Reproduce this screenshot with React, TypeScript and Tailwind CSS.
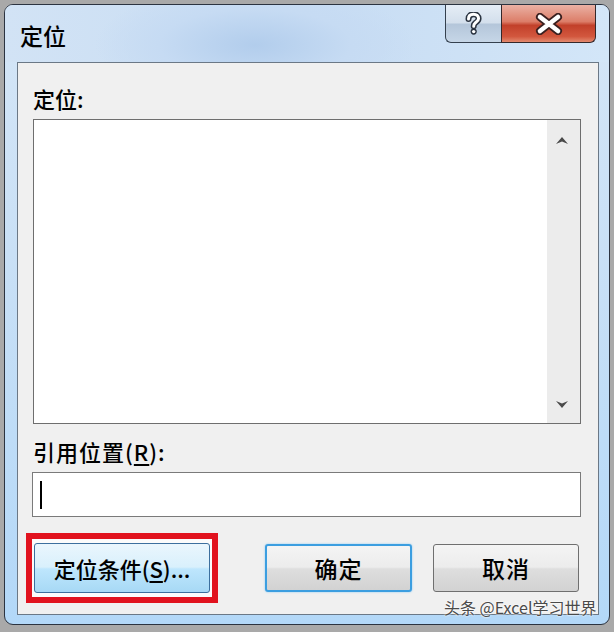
import React from "react";

const font = "font-['Noto_Sans_CJK_SC','Noto_Sans',sans-serif]";

function HelpGlyph() {
  const d = "M3.5 7 C3.5 3.4 6 2.2 8.5 2.2 C11.6 2.2 13.6 4 13.6 6.6 C13.6 9 11.6 10 10.2 11 C9.1 11.8 8.7 12.5 8.7 14.2";
  return (
    <svg width="17" height="24" viewBox="0 0 17 24">
      <path d={d} fill="none" stroke="#2a3340" strokeWidth="6" strokeLinecap="round" />
      <path d={d} fill="none" stroke="#ffffff" strokeWidth="3" strokeLinecap="round" />
      <circle cx="8.7" cy="19.6" r="3.1" fill="#2a3340" />
      <circle cx="8.7" cy="19.6" r="1.7" fill="#ffffff" />
    </svg>
  );
}

function CloseGlyph() {
  return (
    <svg width="30" height="22" viewBox="0 0 30 22">
      <path d="M6 4 L24 18 M24 4 L6 18" stroke="#3a2020" strokeWidth="8" strokeLinecap="round" />
      <path d="M6 4 L24 18 M24 4 L6 18" stroke="#ffffff" strokeWidth="4.6" strokeLinecap="round" />
    </svg>
  );
}

function ScrollArrow({ down }: { down?: boolean }) {
  return (
    <svg width="12" height="7" viewBox="0 0 12 7" className={down ? "rotate-180" : ""}>
      <path d="M0 7 L6 0 L12 7 L6 4.5 Z" fill="#4a4a4a" />
    </svg>
  );
}

export default function App() {
  return (
    <div className={`relative w-[614px] h-[632px] bg-[#a9a9a9] pt-[4px] pl-[4px] pr-[4px] pb-[7px] ${font}`}>
      <div className="flex flex-col h-full rounded-[9px] border border-[#2b3340] bg-[linear-gradient(180deg,#d5e6f7_0%,#c9e0f6_40%,#b3d8f8_100%)] overflow-hidden">
        {/* title bar */}
        <div className="relative h-[57px] shrink-0 bg-[radial-gradient(ellipse_160px_60px_at_250px_40px,#b2cdec_0%,#c6dbf3_60%,transparent_100%),linear-gradient(90deg,#d2e3f5_0%,#c7dcf3_50%,#d3e6f8_100%)]">
          <div className="absolute left-[15px] top-[15px] text-[23px] leading-[30px] font-medium text-black">定位</div>
          <div className="absolute right-[13px] top-0 flex h-[38px]">
            <div className="w-[56px] flex items-center justify-center rounded-bl-[6px] border border-t-0 border-r-0 border-[#34404e] bg-[linear-gradient(180deg,#e5edf6_0%,#d3dfec_48%,#b4c6da_52%,#c6d6e7_100%)]">
              <HelpGlyph />
            </div>
            <div className="w-[95px] flex items-center justify-center rounded-br-[6px] border border-t-0 border-[#34282a] bg-[linear-gradient(180deg,#eab1a4_0%,#dc7d68_45%,#c2402a_55%,#d2573e_85%,#e38a6f_100%)]">
              <CloseGlyph />
            </div>
          </div>
        </div>

        {/* dialog body */}
        <div className="flex-1 ml-[12px] mr-[10px] mb-[9px] border border-[#6b7886] bg-[#f0f0f0] flex flex-col pl-[15px] pr-[17px] pt-[20px] font-medium">
          <div className="text-[22px] leading-[30px] text-black">定位:</div>
          <div className="mt-[6px] h-[305px] border border-[#6e6e6e] bg-white flex justify-end">
            <div className="w-[33px] bg-[#ececec] flex flex-col items-center justify-between pt-[17px] pb-[15px] pr-[3px]">
              <ScrollArrow />
              <ScrollArrow down />
            </div>
          </div>
          <div className="mt-[12px] text-[22px] leading-[30px] text-black tracking-[1px]">
            引用位置(<span className="underline underline-offset-[3px]">R</span>):
          </div>
          <div className="mt-[6px] -ml-[1px] h-[45px] border border-[#7a7a7a] bg-white flex items-center pl-[7px]">
            <div className="w-[2px] h-[28px] bg-black" />
          </div>

          <div className="mt-[16px] -ml-[7px] flex items-center">
            <div className="border-[6px] border-[#e1121e] px-[2px] py-[4px] bg-[#fbfbfb]">
              <button className="w-[176px] h-[50px] rounded-[3px] border border-[#3c6f9e] bg-[linear-gradient(180deg,#eaf6fd_0%,#d9f0fc_48%,#bee6fd_52%,#a7d9f5_100%)] text-[22px] font-medium text-black flex items-center justify-center">
                定位条件(<span className="underline underline-offset-[3px]">S</span>)...
              </button>
            </div>
            <button className="ml-[47px] w-[147px] h-[48px] rounded-[3px] border-2 border-[#3c9ee0] shadow-[0_0_2px_#7cc4f5] bg-[linear-gradient(180deg,#f4f4f4_0%,#ececec_48%,#dedede_52%,#d2d2d2_100%)] text-[23px] font-medium text-black tracking-[1px] flex items-center justify-center">
              确定
            </button>
            <button className="ml-[21px] w-[146px] h-[48px] rounded-[3px] border border-[#6f6f6f] bg-[linear-gradient(180deg,#f4f4f4_0%,#ececec_48%,#dedede_52%,#d2d2d2_100%)] text-[23px] font-medium text-black tracking-[1px] flex items-center justify-center">
              取消
            </button>
          </div>
        </div>
      </div>

      {/* watermark */}
      <div className="absolute left-[444px] top-[597px] text-[16px] leading-[20px] text-[#4a4a4a] [text-shadow:0_0_2px_#ffffff,0_0_2px_#ffffff]">
        头条 @Excel学习世界
      </div>
    </div>
  );
}
